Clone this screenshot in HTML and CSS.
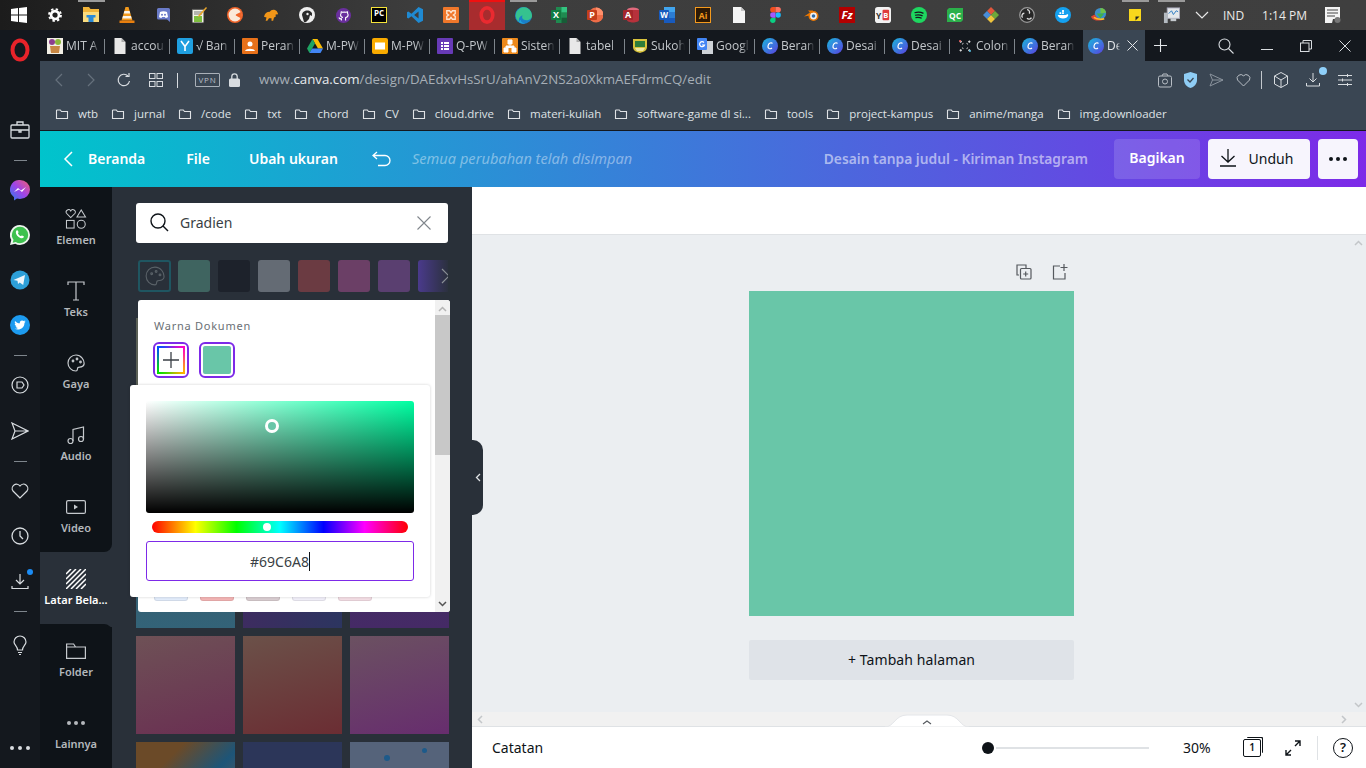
FILE: index.html
```html
<!DOCTYPE html>
<html lang="en">
<head>
  <meta charset="UTF-8">
  <link rel="stylesheet" href="styles.css">
  <title>Desain tanpa judul - Kiriman Instagram</title>
</head>
<body>
  <svg class="defs" width="0" height="0">
    <symbol id="fld" viewBox="0 0 14 14"><path d="M1.500 3.500v8h11v-7H6.500l-1.200-1.500H2z" fill="none" stroke="currentColor" stroke-width="1.100"/></symbol>
    <symbol id="cv" viewBox="0 0 16 16"><defs><linearGradient id="cg" x1="0" y1="0" x2="1" y2="1"><stop offset="0" stop-color="#18b8dc"/><stop offset="1" stop-color="#5b3fe0"/></linearGradient></defs><circle cx="8" cy="8" r="8" fill="url(#cg)"/><path d="M10.500 5.500C9.500 4 6.500 5 6 8c-.4 2.500 2 3.500 4 2" fill="none" stroke="#fff" stroke-width="1.200"/></symbol>
    <symbol id="doc" viewBox="0 0 16 16"><path d="M2.500 0h7l4 4v12h-11z" fill="#e8e8e8"/><path d="M9.500 0v4h4z" fill="#aaa"/></symbol>
  </svg>

  <div class="taskbar">
    <div class="tb-cell tb-win"><svg width="16" height="16" viewBox="0 0 16 16" fill="#fff"><path d="M0 2l7-1v6.500H0zM8 1l8-1v7.500H8zM0 8.500h7V15l-7-1zM8 8.500h8V16l-8-1z"/></svg></div>
    <div class="tb-cell"><svg width="14" height="14" viewBox="0 0 16 16"><circle cx="8" cy="8" r="4.500" fill="none" stroke="#fff" stroke-width="3"/><circle cx="8" cy="8" r="6.800" fill="none" stroke="#fff" stroke-width="2.200" stroke-dasharray="2.700 2.640"/></svg></div>
    <div class="tb-cell tb-open"><svg width="18" height="18" viewBox="0 0 18 18"><path d="M1 1h6l1.500 2H17v13H1z" fill="#f2b53a"/><path d="M1 6h16v10H1z" fill="#fbdc7e"/><path d="M4.500 9h9v2.500h-2V16h-5v-4.500h-2z" fill="#2b8ad8"/></svg></div>
    <div class="tb-cell"><svg width="16" height="18" viewBox="0 0 16 18"><path d="M6.500 1h3l4 13.500h-11z" fill="#f39a1c"/><path d="M5.400 5h5.200l.7 2.500H4.700zM4 10h8l.7 2.500H3.300z" fill="#f8f3ea"/><path d="M.5 14.500h15V17H.5z" fill="#e97f0e"/></svg></div>
    <div class="tb-cell"><svg width="13" height="14" viewBox="0 0 13 14"><path d="M1.500 0h10A1.500 1.500 0 0 1 13 1.500V14l-3-2.500H1.500A1.500 1.500 0 0 1 0 10V1.500A1.500 1.500 0 0 1 1.500 0z" fill="#6a7bc8"/><path d="M3 4c2-1 5-1 7 0l1 5c-1 .7-2 1-2.500 1L8 9H5l-.5 1C4 10 3 9.700 2 9z" fill="#fff"/><circle cx="5" cy="6.800" r="1" fill="#6a7bc8"/><circle cx="8" cy="6.800" r="1" fill="#6a7bc8"/></svg></div>
    <div class="tb-cell"><svg width="16" height="17" viewBox="0 0 16 17"><path d="M1 2h12v14H1z" fill="#f2f2e8" stroke="#333"/><path d="M3 1v2M5 1v2M7 1v2M9 1v2M11 1v2" stroke="#333"/><path d="M3 9h8v6H3z" fill="#7fbf3f"/><path d="M3 5h8M3 7h8" stroke="#777"/><path d="M15 0l1 1-7 8-2 1 .6-2z" fill="#e9a52a"/></svg></div>
    <div class="tb-cell"><svg width="16" height="16" viewBox="0 0 16 16"><circle cx="8" cy="8" r="8" fill="#f0642a"/><circle cx="8" cy="8" r="6.400" fill="#fbe9da"/><path d="M15 4.500L7.500 8l7 3.500z" fill="#f0642a"/><path d="M10.500 5L7.500 8l3 3" fill="none" stroke="#fbe9da" stroke-width="1.200"/></svg></div>
    <div class="tb-cell"><svg width="15" height="12" viewBox="0 0 18 14"><path d="M0 9c1-4 3-6 7-6 1-2 4-3 6-2 2 .6 3 2 4 5l-3 .5V9l-2 1-1 4H9V11H6l-2 3H2l1-4z" fill="#f29618"/></svg></div>
    <div class="tb-cell"><svg width="16" height="16" viewBox="0 0 16 16"><circle cx="8" cy="8" r="8" fill="#efefef"/><path d="M3 8c0-4 6-6 9-3 1 1 1 3 1 4l-2-1-1 4-3 3H5z" fill="#2a2a2a"/><circle cx="8.500" cy="7" r="1.200" fill="#efefef"/><circle cx="12" cy="6.500" r="1" fill="#2a2a2a"/></svg></div>
    <div class="tb-cell"><svg width="15" height="15" viewBox="0 0 18 18"><circle cx="9" cy="9" r="9" fill="#6a2f9e"/><path d="M6.500 15v-2c-2 .4-2.500-.6-3-1.500M11.500 15v-2.500c0-.7 0-1 .2-1.200 1.800-.3 2.800-1 2.800-3 0-.8-.3-1.500-.7-2 .2-.6.100-1.300-.1-1.800-.7 0-1.300.3-1.800.7a7 7 0 0 0-3.800 0C7.700 4.800 7 4.500 6.300 4.500c-.2.500-.3 1.200-.1 1.800-.4.500-.7 1.200-.7 2 0 2 1 2.700 2.800 3" fill="none" stroke="#fff" stroke-width="1.300"/></svg></div>
    <div class="tb-cell"><span class="pc-logo">PC</span></div>
    <div class="tb-cell"><svg width="16" height="16" viewBox="0 0 18 18"><path d="M13 0l5 2.500v13L13 18 5 10.500 1.500 13 0 12V6l1.500-1L5 7.500zM13 5L8 9l5 4z" fill="#1f8ad2"/></svg></div>
    <div class="tb-cell"><svg width="16" height="16" viewBox="0 0 17 17"><rect width="17" height="17" rx="1" fill="#f0772a"/><path d="M4 4h3l1.500 2L10 4h3v3l-2 1.500L13 10v3h-3L8.500 11 7 13H4v-3l2-1.500L4 7z" fill="none" stroke="#fde3cf" stroke-width="1.400"/></svg></div>
    <div class="tb-cell tb-opera"><svg width="16" height="18" viewBox="0 0 18 20"><ellipse cx="9" cy="10" rx="6.500" ry="8" fill="none" stroke="#ea2a30" stroke-width="4"/></svg></div>
    <div class="tb-cell tb-open"><svg width="17" height="17" viewBox="0 0 18 18"><circle cx="9" cy="9" r="9" fill="#1a7fc8"/><path d="M18 9.500c0 2.500-3 4.500-6 4.500-3.500 0-5.500-2.500-4-5-3.500.5-5 4.500-3 7.500C1.500 14 0 11 1 7 2.500 2 7 0 10 .3c4.500.4 8 4.200 8 9.200z" fill="#35c28f"/><path d="M4 16c2 2 5 2 7 1.500-3 0-5-2-5-4z" fill="#1fa4e0"/></svg></div>
    <div class="tb-cell"><svg width="16" height="16" viewBox="0 0 16 16"><path d="M5 0h11v16H5z" fill="#1f8a50"/><path d="M10.500 0H16v5.300h-5.500z" fill="#33c481"/><path d="M10.500 10.700H16V16h-5.500z" fill="#185c37"/><rect y="3" width="10" height="10" rx="1" fill="#107c41"/><text x="5" y="11" text-anchor="middle" class="logo-txt" fill="#fff" font-size="9">X</text></svg></div>
    <div class="tb-cell"><svg width="16" height="16" viewBox="0 0 16 16"><circle cx="9" cy="8" r="7.500" fill="#ed6c47"/><path d="M9 .5A7.500 7.500 0 0 1 16.500 8H9z" fill="#ff8f6b"/><rect y="3" width="10" height="10" rx="1" fill="#c43e1c"/><text x="5" y="11" text-anchor="middle" class="logo-txt" fill="#fff" font-size="9">P</text></svg></div>
    <div class="tb-cell"><svg width="16" height="16" viewBox="0 0 16 16"><ellipse cx="10" cy="3" rx="6" ry="2.500" fill="#e0697c"/><path d="M4 3v10c0 1.500 3 2.500 6 2.500s6-1 6-2.500V3z" fill="#b7313b"/><rect y="3" width="10" height="10" rx="1" fill="#a4262c"/><text x="5" y="11" text-anchor="middle" class="logo-txt" fill="#fff" font-size="9">A</text></svg></div>
    <div class="tb-cell"><svg width="16" height="16" viewBox="0 0 16 16"><path d="M5 0h11v16H5z" fill="#2b7cd3"/><path d="M5 0h11v5H5z" fill="#41a5ee"/><path d="M5 11h11v5H5z" fill="#185abd"/><rect y="3" width="10" height="10" rx="1" fill="#185abd"/><text x="5" y="11" text-anchor="middle" class="logo-txt" fill="#fff" font-size="8">W</text></svg></div>
    <div class="tb-cell"><svg width="16" height="16" viewBox="0 0 16 16"><rect x=".5" y=".5" width="15" height="15" fill="#2e1a05" stroke="#f59a1d"/><text x="8" y="11.500" text-anchor="middle" class="logo-txt" fill="#f59a1d" font-size="8.500">Ai</text></svg></div>
    <div class="tb-cell"><svg width="12" height="16" viewBox="0 0 12 16"><path d="M0 0h8l4 4v12H0z" fill="#f4f4f4"/><path d="M8 0v4h4z" fill="#c4c4c4"/></svg></div>
    <div class="tb-cell"><svg width="11" height="16" viewBox="0 0 12 18"><circle cx="9" cy="9" r="3" fill="#1abcfe"/><path d="M3 12h3v3a3 3 0 1 1-3-3z" fill="#0acf83"/><path d="M3 6h3v6H3a3 3 0 0 1 0-6z" fill="#a259ff"/><path d="M3 0h3v6H3a3 3 0 0 1 0-6z" fill="#f24e1e"/><path d="M6 0h3a3 3 0 0 1 0 6H6z" fill="#ff7262"/></svg></div>
    <div class="tb-cell"><svg width="15" height="13" viewBox="0 0 15 13"><circle cx="9.500" cy="7" r="4.200" fill="#f0f0f0" stroke="#ea7600" stroke-width="1.600"/><circle cx="9.500" cy="7" r="1.800" fill="#2b6aa8"/><path d="M0 7.500L6 3.500V6.500zM4 1.500h5v2H6z" fill="#ea7600"/></svg></div>
    <div class="tb-cell"><svg width="16" height="16" viewBox="0 0 17 17"><rect width="17" height="17" fill="#b30000"/><text x="8.500" y="13" text-anchor="middle" class="logo-txt" fill="#fff" font-size="12" font-style="italic">Fz</text></svg></div>
    <div class="tb-cell"><svg width="16" height="16" viewBox="0 0 17 17"><rect width="17" height="17" rx="3" fill="#f2f2f2"/><text x="1" y="12.500" class="logo-txt" fill="#333" font-size="9">Y</text><rect x="8" y="3" width="7" height="11" rx="1" fill="#e03a3a"/><text x="11.500" y="12" text-anchor="middle" class="logo-txt" fill="#fff" font-size="8">B</text></svg></div>
    <div class="tb-cell"><svg width="16" height="16" viewBox="0 0 18 18"><circle cx="9" cy="9" r="9" fill="#1ed760"/><path d="M4 6.500c3-1 7-1 10 .7M4.500 9.300c3-.8 6-.6 8.500.7M5 12c2.500-.6 5-.4 7 .6" stroke="#14181e" stroke-width="1.400" fill="none"/></svg></div>
    <div class="tb-cell"><svg width="16" height="14" viewBox="0 0 16 14"><path d="M2 0h14v12l-2 2H0V2z" fill="#2bb04a"/><text x="8" y="10.500" text-anchor="middle" class="logo-txt" fill="#fff" font-size="8.500">QC</text></svg></div>
    <div class="tb-cell"><svg width="16" height="16" viewBox="0 0 18 18"><path d="M9 0l4.500 4.500L9 9 4.500 4.500z" fill="#e0563c"/><path d="M13.500 4.500L18 9l-4.500 4.500L9 9z" fill="#6ea83a"/><path d="M4.500 4.500L9 9l-4.500 4.500L0 9z" fill="#4a8ed8"/><path d="M9 9l4.500 4.500L9 18l-4.500-4.500z" fill="#f0c43c"/></svg></div>
    <div class="tb-cell"><svg width="16" height="16" viewBox="0 0 18 18"><circle cx="9" cy="9" r="8.200" fill="#262626" stroke="#9a9a9a" stroke-width="1.400"/><path d="M9 3a3 3 0 0 1 2.500 4.500M14 12a3 3 0 0 1-5 .5M4 12a3 3 0 0 1 2-5" fill="none" stroke="#ddd" stroke-width="1.500"/></svg></div>
    <div class="tb-cell"><svg width="16" height="16" viewBox="0 0 18 18"><circle cx="9" cy="9" r="9" fill="#14a1f0"/><path d="M3 9h9c1 0 1.500-1 2-1l1 1c-1 3-3 4-6 4-3 0-5-1-6-4z" fill="#fff"/><path d="M5 6h2v2H5zM8 6h2v2H8zM8 3.500h2v2H8z" fill="#fff"/></svg></div>
    <div class="tb-cell"><svg width="17" height="16" viewBox="0 0 18 17"><circle cx="10" cy="7" r="6" fill="#3d8fc9"/><path d="M10 1a6 6 0 0 1 6 5l-6 1z" fill="#6fc24a"/><path d="M6 7h8l-4 5z" fill="#3fb14a"/><path d="M0 10c1 4 8 6 15 3-4 0-9 0-11-5z" fill="#e2452f"/><path d="M3 11c3 2 7 2.500 11 1.500" stroke="#f5c02e" stroke-width="1.500" fill="none"/></svg></div>
    <div class="tb-cell tb-open"><svg width="12" height="12" viewBox="0 0 12 12"><path d="M0 0h12v12H0z" fill="#f9d71c"/><path d="M6.500 11.500V7.500h4z" fill="#222"/></svg></div>
    <div class="tb-cell tb-open"><svg width="17" height="17" viewBox="0 0 18 18"><rect x="4.500" y="1" width="13" height="11" fill="#e4e7ea" stroke="#aab"/><path d="M6 7l3-3 2 4 3-4 2 1" stroke="#2878c0" fill="none"/><rect x="1" y="6" width="4" height="11" fill="#b4bac0"/><path d="M8 12h6v3H8z" fill="#c6cbd0"/></svg></div>
    <div class="tray">
      <svg width="14" height="8" viewBox="0 0 14 8"><path d="M1 1l6 6 6-6" fill="none" stroke="#e8e8e8" stroke-width="1.200"/></svg>
      <span class="tray-lang">IND</span>
      <span class="tray-time">1:14 PM</span>
      <svg class="tray-note" width="18" height="18" viewBox="0 0 18 18"><path d="M1 1h15v12H9l-1 4H1z" fill="#f4f4f4"/><path d="M3 4h11M3 7h11M3 10h8" stroke="#444"/><circle cx="13.500" cy="14" r="3" fill="#777"/></svg>
    </div>
  </div>

  <div class="window">
    <aside class="opera-side">
      <div class="side-logo"><svg width="20" height="24" viewBox="0 0 20 24"><ellipse cx="10" cy="12" rx="7.500" ry="9.500" fill="none" stroke="#e8232a" stroke-width="4"/></svg></div>
      <div class="side-ico side-brief"><svg width="20" height="18" viewBox="0 0 20 18" fill="none" stroke="#d8dce0" stroke-width="1.300"><rect x="1" y="4" width="18" height="13" rx="1"/><path d="M7 4V1h6v3M1 9h18M9 9h2v2H9z"/></svg></div>
      <div class="side-dash"></div>
      <div class="side-ico"><svg width="20" height="21" viewBox="0 0 20 21"><defs><linearGradient id="mg" x1="0" y1="1" x2="1" y2="0"><stop offset="0" stop-color="#2a7ef0"/><stop offset=".5" stop-color="#a044e8"/><stop offset="1" stop-color="#f45f70"/></linearGradient></defs><path d="M10 0a10 9.500 0 0 1 0 19c-1 0-2-.2-3-.4L4 20.500v-3.300A9.500 9.500 0 0 1 10 0z" fill="url(#mg)"/><path d="M4 12l4-4 3 2.500L16 7l-4 5-3-2.500z" fill="#fff"/></svg></div>
      <div class="side-ico"><svg width="20" height="20" viewBox="0 0 20 20"><path d="M10 0a10 10 0 0 1 0 20c-1.800 0-3.400-.4-4.800-1.200L0 20l1.300-5A10 10 0 0 1 10 0z" fill="#eef5ee"/><path d="M10 1.800a8.200 8.200 0 0 1 0 16.400c-1.600 0-3-.4-4.300-1.200l-3 .8.800-3A8.200 8.200 0 0 1 10 1.800z" fill="#3ec14f"/><path d="M6.500 5.500c1-.8 1.500 0 2 1.500.2.600-.7 1-.5 1.500.5 1.200 1.500 2.100 2.700 2.600.5.100.9-.8 1.400-.6 1.500.6 2.300 1 1.500 2-1 1.300-3 .9-5-.5-2-1.500-3.700-4.500-2.100-6.500z" fill="#fff"/></svg></div>
      <div class="side-ico"><svg width="20" height="20" viewBox="0 0 20 20"><circle cx="10" cy="10" r="9.500" fill="#2d9fd8"/><path d="M3.500 10L15 5l-1.800 10-3.500-2.500L8 14l-.5-3.300z" fill="#eef6fb"/></svg></div>
      <div class="side-ico"><svg width="20" height="20" viewBox="0 0 20 20"><circle cx="10" cy="10" r="10" fill="#1d9bf0"/><path d="M4.500 13.800c4.500 2.200 10-.3 10-6 .5-.3.900-.8 1.100-1.300-.5.200-.9.300-1.300.3.500-.3.800-.8 1-1.300-.5.300-1 .5-1.500.6a2.400 2.400 0 0 0-4 2.200C8 8.200 6.300 7.300 5.100 5.900c-.6 1.100-.3 2.500.7 3.200-.4 0-.8-.1-1.100-.3 0 1.200.8 2.200 2 2.400-.4.100-.8.100-1.100 0 .3 1 1.200 1.700 2.300 1.700-1 .7-2.200 1-3.400.9z" fill="#fff"/></svg></div>
      <div class="side-dash"></div>
      <div class="side-ico"><svg width="18" height="18" viewBox="0 0 18 18" fill="none" stroke="#d8dce0" stroke-width="1.200"><circle cx="9" cy="9" r="8"/><path d="M6 6h5l2 3-2 3H6z"/></svg></div>
      <div class="side-ico side-send"><svg width="18" height="18" viewBox="0 0 18 18" fill="none" stroke="#d8dce0" stroke-width="1.200"><path d="M1 1l16 8-16 8 3-8zM4 9h13"/></svg></div>
      <div class="side-dash"></div>
      <div class="side-ico"><svg width="18" height="16" viewBox="0 0 18 16" fill="none" stroke="#d8dce0" stroke-width="1.200"><path d="M9 15L2 8a4.300 4.300 0 0 1 7-5 4.300 4.300 0 0 1 7 5z"/></svg></div>
      <div class="side-ico"><svg width="18" height="18" viewBox="0 0 18 18" fill="none" stroke="#d8dce0" stroke-width="1.300"><circle cx="9" cy="9" r="8"/><path d="M9 4v5l3 3"/></svg></div>
      <div class="side-ico side-dl"><svg width="18" height="17" viewBox="0 0 18 17" fill="none" stroke="#d8dce0" stroke-width="1.200"><path d="M9 1v10M5 7l4 4 4-4M1 13v2.500h16V13"/></svg><span class="blue-dot"></span></div>
      <div class="side-dash"></div>
      <div class="side-ico side-bulb"><svg width="14" height="20" viewBox="0 0 14 20" fill="none" stroke="#d8dce0" stroke-width="1.200"><path d="M4.500 15C4.500 11 1 10 1 7a6 6 0 0 1 12 0c0 3-3.500 4-3.500 8z"/><path d="M5 17.500h4M6 19.500h2"/></svg></div>
      <div class="side-more"><i></i><i></i><i></i></div>
    </aside>

    <div class="browser">
      <div class="tabs">
        <div class="tab"><svg class="fav" viewBox="0 0 16 16"><rect width="16" height="16" fill="#f2efe6"/><circle cx="5" cy="4" r="3" fill="#8c3f8e"/><circle cx="11" cy="4" r="3" fill="#8ab83a"/><path d="M3 8h10l-1 7H4z" fill="#c88744"/></svg><span class="tab-name">MIT A</span></div>
        <div class="tab"><svg class="fav"><use href="#doc"/></svg><span class="tab-name">accou</span></div>
        <div class="tab"><svg class="fav" viewBox="0 0 16 16"><rect width="16" height="16" rx="2" fill="#1f9fe0"/><path d="M4 3l4 5.500L12 3M8 8.500V13" fill="none" stroke="#fff" stroke-width="1.600"/></svg><span class="tab-name">√ Ban</span></div>
        <div class="tab"><svg class="fav" viewBox="0 0 16 16"><rect width="16" height="16" rx="1" fill="#e8711a"/><circle cx="8" cy="6" r="2.500" fill="#fff"/><path d="M3 13c1-3 9-3 10 0z" fill="#fff"/></svg><span class="tab-name">Peran</span></div>
        <div class="tab"><svg class="fav" viewBox="0 0 16 16"><path d="M5.500 1h5L16 10.500h-5z" fill="#fbbc04"/><path d="M5.500 1L0 10.500 2.500 15 8 5.500z" fill="#1fa463"/><path d="M2.500 15h11l2.500-4.500H5z" fill="#4285f4"/></svg><span class="tab-name">M-PW</span></div>
        <div class="tab"><svg class="fav" viewBox="0 0 16 16"><rect width="16" height="16" rx="2" fill="#f9ab00"/><rect x="3" y="4.500" width="10" height="7" fill="#fff"/></svg><span class="tab-name">M-PW</span></div>
        <div class="tab"><svg class="fav" viewBox="0 0 16 16"><rect width="16" height="16" rx="1" fill="#673ab7"/><path d="M4 4h2v2H4zM7 4h5v2H7zM4 7h2v2H4zM7 7h5v2H7zM4 10h2v2H4zM7 10h5v2H7z" fill="#fff"/></svg><span class="tab-name">Q-PW</span></div>
        <div class="tab"><svg class="fav" viewBox="0 0 16 16"><rect width="16" height="16" rx="1" fill="#ee8a1c"/><path d="M6 2h4v4H6zM2 10h4v4H2zM10 10h4v4h-4zM8 6v2M4 10V8h8v2" fill="#fff" stroke="#fff"/></svg><span class="tab-name">Sisten</span></div>
        <div class="tab"><svg class="fav"><use href="#doc"/></svg><span class="tab-name">tabel</span></div>
        <div class="tab"><svg class="fav" viewBox="0 0 16 16"><path d="M1 1h14v8c0 4-4 5-7 6-3-1-7-2-7-6z" fill="#d8c23c"/><path d="M3 3h10v6H3z" fill="#2e7d3a"/><path d="M3 10h10l-2 3H5z" fill="#f0e8a0"/></svg><span class="tab-name">Sukoh</span></div>
        <div class="tab"><svg class="fav" viewBox="0 0 16 16"><rect x="5" y="3" width="11" height="13" fill="#cfd3d8"/><rect width="10" height="12" rx="1" fill="#4285f4"/><path d="M7 4.500A2.500 2.500 0 1 0 7.500 7H5" fill="none" stroke="#fff" stroke-width="1.200"/></svg><span class="tab-name">Googl</span></div>
        <div class="tab"><svg class="fav"><use href="#cv"/></svg><span class="tab-name">Beran</span></div>
        <div class="tab"><svg class="fav"><use href="#cv"/></svg><span class="tab-name">Desai</span></div>
        <div class="tab"><svg class="fav"><use href="#cv"/></svg><span class="tab-name">Desai</span></div>
        <div class="tab"><svg class="fav" viewBox="0 0 16 16"><path d="M3 3l3 3M13 3l-3 3M3 13l3-3M13 13l-3-3" stroke-width="2" stroke="#d8d8d8" stroke-dasharray="2 1.500"/><circle cx="3" cy="3" r="1" fill="#e85d5d"/><circle cx="13" cy="13" r="1" fill="#4bb5d8"/></svg><span class="tab-name">Colon</span></div>
        <div class="tab tab-last"><svg class="fav"><use href="#cv"/></svg><span class="tab-name">Beran</span></div>
        <div class="tab tab-active"><svg class="fav"><use href="#cv"/></svg><span class="tab-name">De</span><svg class="tab-x" width="11" height="11" viewBox="0 0 11 11"><path d="M.5.500l10 10M10.500.500l-10 10" stroke="#e4e7ea"/></svg></div>
        <div class="tab-plus"><svg width="13" height="13" viewBox="0 0 13 13"><path d="M6.500 0v13M0 6.500h13" stroke="#e4e7ea" stroke-width="1.100"/></svg></div>
        <div class="win-btns">
          <svg width="16" height="16" viewBox="0 0 16 16" fill="none" stroke="#d8dce0" stroke-width="1.100"><circle cx="6.500" cy="6.500" r="5.500"/><path d="M10.500 10.500L15.500 15.500"/></svg>
          <svg width="12" height="12" viewBox="0 0 12 12"><path d="M0 9.500h12" stroke="#d8dce0"/></svg>
          <svg width="12" height="12" viewBox="0 0 12 12" fill="none" stroke="#d8dce0"><rect x=".5" y="3" width="8.500" height="8.500"/><path d="M3 3V.5h8.500V9H9"/></svg>
          <svg width="12" height="12" viewBox="0 0 12 12"><path d="M.5.500l11 11M11.500.500l-11 11" stroke="#d8dce0"/></svg>
        </div>
      </div>

      <div class="addr">
        <svg class="a-back" width="9" height="14" viewBox="0 0 9 14"><path d="M8 1L2 7l6 6" fill="none" stroke="#66717d" stroke-width="1.200"/></svg>
        <svg class="a-fwd" width="9" height="14" viewBox="0 0 9 14"><path d="M1 1l6 6-6 6" fill="none" stroke="#66717d" stroke-width="1.200"/></svg>
        <svg class="a-reload" width="14" height="14" viewBox="0 0 14 14" fill="none" stroke="#d8dce0" stroke-width="1.200"><path d="M12.500 8A5.700 5.700 0 1 1 11 3"/><path d="M8.500 3.500H12V0"/></svg>
        <svg class="a-grid" width="14" height="14" viewBox="0 0 14 14" fill="none" stroke="#d8dce0"><rect x=".5" y=".5" width="5.500" height="5"/><rect x="8" y=".5" width="5.500" height="5"/><rect x=".5" y="8.500" width="5.500" height="5"/><rect x="8" y="8.500" width="5.500" height="5"/></svg>
        <span class="a-sep"></span>
        <span class="a-vpn">VPN</span>
        <svg class="a-lock" width="11" height="14" viewBox="0 0 11 14"><rect y="5.500" width="11" height="8.500" rx="1.500" fill="#d8dce0"/><path d="M2.800 6V3.500a2.700 2.700 0 0 1 5.400 0V6" fill="none" stroke="#d8dce0" stroke-width="1.300"/></svg>
        <div class="a-url">www.<b>canva.com</b>/design/DAEdxvHsSrU/ahAnV2NS2a0XkmAEFdrmCQ/edit</div>
        <div class="a-tools">
          <svg width="14" height="15" viewBox="0 0 14 15" fill="none" stroke="#b8bec5"><rect x=".5" y="3" width="13" height="11" rx="1.500"/><circle cx="7" cy="8.500" r="2.500"/><path d="M4 3l1-2h4l1 2"/></svg>
          <svg width="13" height="16" viewBox="0 0 13 16"><path d="M0 2l6.500-2L13 2v6c0 4-3 7-6.500 8C3 15 0 12 0 8z" fill="#8fcdf5"/><path d="M3.500 7.500l2.500 2.500 3.500-4" fill="none" stroke="#3a4653" stroke-width="1.300"/></svg>
          <svg width="15" height="14" viewBox="0 0 15 14" fill="none" stroke="#8a939d"><path d="M1 1l13 6-13 6 2.500-6zM3.500 7H14"/></svg>
          <svg width="15" height="14" viewBox="0 0 15 14" fill="none" stroke="#b8bec5"><path d="M7.500 13L1.500 7A3.700 3.700 0 0 1 7.500 2.800 3.700 3.700 0 0 1 13.500 7z"/></svg>
          <span class="a-tsep"></span>
          <svg width="14" height="16" viewBox="0 0 14 16" fill="none" stroke="#d8dce0"><path d="M7 .5l6.500 3.500v8L7 15.500.5 12V4zM.5 4L7 8l6.500-4M7 8v7.500"/></svg>
          <span class="a-dl"><svg width="14" height="14" viewBox="0 0 14 14" fill="none" stroke="#d8dce0"><path d="M7 0v9M3.500 5.500L7 9l3.500-3.500M.5 10v3h13v-3"/></svg><span class="light-dot"></span></span>
          <svg width="14" height="14" viewBox="0 0 14 14" fill="none" stroke="#d8dce0"><path d="M0 2.500h14M0 7h14M0 11.500h14"/><path d="M9.500 1v3M4.500 5.500v3M9.500 10v3"/></svg>
        </div>
      </div>

      <div class="bmarks">
        <span class="bm"><svg><use href="#fld"/></svg>wtb</span>
        <span class="bm"><svg><use href="#fld"/></svg>jurnal</span>
        <span class="bm"><svg><use href="#fld"/></svg>/code</span>
        <span class="bm"><svg><use href="#fld"/></svg>txt</span>
        <span class="bm"><svg><use href="#fld"/></svg>chord</span>
        <span class="bm"><svg><use href="#fld"/></svg>CV</span>
        <span class="bm"><svg><use href="#fld"/></svg>cloud.drive</span>
        <span class="bm"><svg><use href="#fld"/></svg>materi-kuliah</span>
        <span class="bm"><svg><use href="#fld"/></svg>software-game dl si...</span>
        <span class="bm"><svg><use href="#fld"/></svg>tools</span>
        <span class="bm"><svg><use href="#fld"/></svg>project-kampus</span>
        <span class="bm"><svg><use href="#fld"/></svg>anime/manga</span>
        <span class="bm"><svg><use href="#fld"/></svg>img.downloader</span>
      </div>

      <header class="cv-head">
        <svg class="head-back" width="10" height="16" viewBox="0 0 10 16"><path d="M9 1L2 8l7 7" fill="none" stroke="#fff" stroke-width="1.500"/></svg>
        <span class="head-link head-home">Beranda</span>
        <span class="head-link head-file">File</span>
        <span class="head-link">Ubah ukuran</span>
        <svg class="head-undo" width="19" height="16" viewBox="0 0 19 16" fill="none" stroke="#fff" stroke-width="1.300"><path d="M5 1L1 4.500 5 8M1 4.500h12a4.500 4.500 0 0 1 0 10H6"/></svg>
        <span class="head-saved">Semua perubahan telah disimpan</span>
        <span class="head-title">Desain tanpa judul - Kiriman Instagram</span>
        <span class="btn-share">Bagikan</span>
        <span class="btn-white btn-dl"><svg width="18" height="18" viewBox="0 0 18 18" fill="none" stroke="#0e1318" stroke-width="1.300"><path d="M9 0v12.500M2.500 7L9 13l6.500-6M1 17h16"/></svg>Unduh</span>
        <span class="btn-white btn-more"><i></i><i></i><i></i></span>
      </header>

      <div class="editor">
        <nav class="nav">
          <div class="nav-item"><svg width="22" height="21" viewBox="0 0 22 21" fill="none" stroke="#c5c9cd" stroke-width="1.100"><path d="M5.500 9L1 4.500A2.500 2.500 0 0 1 5.500 2 2.500 2.500 0 0 1 10 4.500z"/><path d="M16.500 1l4.500 7.500h-9z"/><rect x="1" y="12" width="8" height="8"/><circle cx="16.500" cy="16" r="4.200"/></svg><span>Elemen</span></div>
          <div class="nav-item"><svg width="18" height="20" viewBox="0 0 18 20" fill="none" stroke="#c5c9cd" stroke-width="1.200"><path d="M1 4V1h16v3M9 1v18M6 19h6"/></svg><span>Teks</span></div>
          <div class="nav-item"><svg width="18" height="18" viewBox="0 0 18 18" fill="none" stroke="#c5c9cd" stroke-width="1.200"><path d="M9 1a8 8 0 1 0 0 16c2 0 1-2.500 2-3.500s5 .5 6-3c.8-4.500-3-9.500-8-9.500z"/><circle cx="6" cy="7" r=".8"/><circle cx="10" cy="5" r=".8"/><circle cx="13.500" cy="8" r=".8"/></svg><span>Gaya</span></div>
          <div class="nav-item"><svg width="18" height="19" viewBox="0 0 18 19" fill="none" stroke="#c5c9cd" stroke-width="1.200"><circle cx="3.500" cy="15.500" r="2.500"/><circle cx="14" cy="13.500" r="2.500"/><path d="M6 15.500V4l10.500-2.500v12"/></svg><span>Audio</span></div>
          <div class="nav-item"><svg width="20" height="14" viewBox="0 0 20 14"><rect x=".6" y=".6" width="18.800" height="12.800" rx="1.500" fill="none" stroke="#c5c9cd" stroke-width="1.200"/><path d="M8 4.500l4 2.500-4 2.500z" fill="#c5c9cd"/></svg><span>Video</span></div>
          <div class="nav-item nav-active"><svg width="20" height="20" viewBox="0 0 20 20" fill="none" stroke="#fff" stroke-width="1.500"><path d="M0 5l5-5M0 10L10 0M0 15L15 0M0 20L20 0M5 20L20 5M10 20L20 10M15 20l5-5"/></svg><span>Latar Bela...</span></div>
          <div class="nav-item"><svg width="20" height="16" viewBox="0 0 20 16" fill="none" stroke="#c5c9cd" stroke-width="1.200"><path d="M.6 15.400V1h7l2 3h9.800v11.400zM.6 4h9"/></svg><span>Folder</span></div>
          <div class="nav-item"><span class="nav-dots"><i></i><i></i><i></i></span><span>Lainnya</span></div>
          <div class="nav-cutout"></div>
        </nav>

        <section class="panel">
          <div class="search">
            <svg width="19" height="19" viewBox="0 0 19 19" fill="none" stroke="#0e1318" stroke-width="1.400"><circle cx="8" cy="8" r="7"/><path d="M13 13l5 5"/></svg>
            <span class="search-text">Gradien</span>
            <svg class="search-x" width="14" height="14" viewBox="0 0 14 14"><path d="M.5.500l13 13M13.500.500l-13 13" stroke="#80868c" stroke-width="1.100"/></svg>
          </div>
          <div class="sw-row">
            <div class="sw sw-palette"><svg width="20" height="20" viewBox="0 0 18 18" fill="none" stroke="#5a6268" stroke-width="1"><path d="M9 1a8 8 0 1 0 0 16c2 0 1-2.500 2-3.500s5 .5 6-3c.8-4.500-3-9.500-8-9.500z"/><circle cx="6" cy="7" r=".8"/><circle cx="10" cy="5" r=".8"/><circle cx="13.500" cy="8" r=".8"/></svg></div>
            <div class="sw sw-c1"></div>
            <div class="sw sw-c2"></div>
            <div class="sw sw-c3"></div>
            <div class="sw sw-c4"></div>
            <div class="sw sw-c5"></div>
            <div class="sw sw-c6"></div>
            <div class="sw sw-c7"><svg width="9" height="16" viewBox="0 0 9 16"><path d="M1 1l7 7-7 7" fill="none" stroke="#8a8f95" stroke-width="1.200"/></svg></div>
          </div>
          <div class="tiles">
            <div class="tile t-a1"></div><div class="tile t-a2"></div><div class="tile t-a3"></div>
            <div class="tile t-a1"></div><div class="tile t-a2"></div><div class="tile t-a3"></div>
            <div class="tile t-b1"></div><div class="tile t-b2"></div><div class="tile t-b3"></div>
            <div class="tile t-c1"></div><div class="tile t-c2"></div><div class="tile t-c3"></div>
            <div class="tile t-d1"></div><div class="tile t-d2"></div><div class="tile t-d3"><i class="spot spot-a"></i><i class="spot spot-b"></i></div>
          </div>

          <div class="pop-colors">
            <div class="pop-body">
              <div class="pop-label">Warna Dokumen</div>
              <div class="doc-row">
                <div class="doc-sw doc-add"><span class="rainbow"><svg width="16" height="16" viewBox="0 0 16 16"><path d="M8 0v16M0 8h16" stroke="#3a3f45" stroke-width="1.300"/></svg></span></div>
                <div class="doc-sw"><span class="doc-fill"></span></div>
              </div>
              <div class="peek-row">
                <span class="peek p1"></span><span class="peek p2"></span><span class="peek p3"></span><span class="peek p4"></span><span class="peek p5"></span>
              </div>
            </div>
            <div class="pop-scroll">
              <svg width="9" height="6" viewBox="0 0 9 6"><path d="M1 5l3.500-3.500L8 5" fill="none" stroke="#b5b5b5" stroke-width="1.500"/></svg>
              <div class="pop-thumb"></div>
              <svg class="pop-down" width="9" height="6" viewBox="0 0 9 6"><path d="M1 1l3.500 3.500L8 1" fill="none" stroke="#555" stroke-width="1.500"/></svg>
            </div>
          </div>

          <div class="picker">
            <div class="pick-area"><span class="pick-knob"></span></div>
            <div class="hue"><span class="hue-knob"></span></div>
            <div class="hex"><span class="hex-val">#69C6A8</span></div>
          </div>
        </section>

        <div class="handle"><svg width="6" height="9" viewBox="0 0 6 9"><path d="M5 1L1.500 4.500 5 8" fill="none" stroke="#e0e3e6" stroke-width="1.300"/></svg></div>

        <main class="work">
          <div class="work-top"></div>
          <div class="work-mid">
            <div class="stage">
              <div class="page-tools">
                <svg width="16" height="16" viewBox="0 0 16 16" fill="none" stroke="#55595e" stroke-width="1.200"><path d="M3 11H1V1h9v3"/><rect x="4.500" y="4.500" width="10.500" height="10.500" rx="1"/><path d="M9.700 7.500v5M7.200 10h5"/></svg>
                <svg width="16" height="16" viewBox="0 0 16 16" fill="none" stroke="#55595e" stroke-width="1.200"><path d="M8 2H1.500v13H13V9M12 0v7M8.500 3.500h7"/></svg>
              </div>
              <div class="page"></div>
              <div class="add-page">+ Tambah halaman</div>
            </div>
            <div class="v-scroll">
              <svg width="9" height="6" viewBox="0 0 9 6"><path d="M1 5l3.500-3.500L8 5" fill="none" stroke="#c3c6c9" stroke-width="1.500"/></svg>
              <svg width="9" height="6" viewBox="0 0 9 6"><path d="M1 1l3.500 3.500L8 1" fill="none" stroke="#c3c6c9" stroke-width="1.500"/></svg>
            </div>
          </div>
          <div class="h-scroll">
            <svg width="6" height="9" viewBox="0 0 6 9"><path d="M5 1L1.500 4.500 5 8" fill="none" stroke="#c3c6c9" stroke-width="1.500"/></svg>
            <svg width="6" height="9" viewBox="0 0 6 9"><path d="M1 1l3.500 3.500L1 8" fill="none" stroke="#c3c6c9" stroke-width="1.500"/></svg>
            <svg class="notes-tab" width="84" height="13" viewBox="0 0 84 13"><path d="M0 13C9 13 10 1 22 1H62C74 1 75 13 84 13z" fill="#fff" stroke="#e4e6e9"/><path d="M38 10l4-3 4 3" fill="none" stroke="#55595e" stroke-width="1.100"/></svg>
          </div>
          <footer class="foot">
            <span class="foot-notes">Catatan</span>
            <div class="zoom-bar"><span class="zoom-knob"></span><span class="zoom-track"></span></div>
            <span class="zoom-val">30%</span>
            <span class="pages-btn"><span class="pages-num">1</span></span>
            <svg class="foot-exp" width="16" height="16" viewBox="0 0 16 16" fill="none" stroke="#0e1318" stroke-width="1.400"><path d="M10 1h5v5M15 1l-5 5M6 15H1v-5M1 15l5-5"/></svg>
            <span class="foot-sep"></span>
            <span class="help">?</span>
          </footer>
        </main>
      </div>
    </div>
  </div>
</body>
</html>
```

FILE: styles.css
```css
* {
  box-sizing: border-box;
}
html, body {
  margin: 0;
  height: 768px;
  overflow: hidden;
}
body {
  font-family: "Noto Sans", "Open Sans", sans-serif;
  background: #14181e;
  display: flex;
  flex-direction: column;
}
.defs {
  position: absolute;
}
.logo-txt {
  font-family: "Open Sans", sans-serif;
  font-weight: 700;
}

/* windows taskbar */
.taskbar {
  height: 30px;
  flex: none;
  display: flex;
  background: linear-gradient(to right, #1c1c1c, #2a2a2a 180px, #3d3d3d 420px, #3f3f3f);
}
.tb-cell {
  width: 36px;
  height: 30px;
  flex: none;
  display: flex;
  align-items: center;
  justify-content: center;
  position: relative;
}
.tb-win {
  width: 37px;
}
.tb-open::before {
  content: "";
  position: absolute;
  top: 0;
  left: 5px;
  right: 4px;
  height: 2px;
  background: #9a9a9a;
}
.tb-opera {
  background: #a82c2e;
}
.tb-opera::before {
  content: "";
  position: absolute;
  top: 0;
  left: 0;
  right: 0;
  height: 2px;
  background: #f01010;
}
.pc-logo {
  width: 16px;
  height: 16px;
  background: #000;
  border: 1px solid #f5e33a;
  color: #fff;
  font: 700 8px/10px "Open Sans", sans-serif;
  padding-left: 2px;
}
.tray {
  flex: 1;
  display: flex;
  align-items: center;
  color: #eceae8;
  font-family: "Open Sans", sans-serif;
  font-size: 12px;
  padding-left: 6px;
}
.tray-lang {
  margin-left: 14px;
}
.tray-time {
  margin-left: 18px;
}
.tray-note {
  margin-left: 17px;
}

.window {
  flex: 1;
  display: flex;
  min-height: 0;
}

/* opera sidebar */
.opera-side {
  width: 40px;
  flex: none;
  background: #14181e;
  position: relative;
  display: flex;
  flex-direction: column;
  align-items: center;
}
.side-logo {
  height: 24px;
  margin-top: 8px;
}
.side-ico {
  height: 20px;
  margin-top: 25px;
  display: flex;
  align-items: center;
  justify-content: center;
  position: relative;
}
.side-dash + .side-ico {
  margin-top: 0;
}
.side-brief {
  margin-top: 58px;
}
.side-send {
  margin-top: 26px;
}
.side-bulb {
  margin-top: 4px !important;
}
.side-dash {
  width: 13px;
  height: 1px;
  flex: none;
  background: #7e858c;
  margin: 20px 0 19px;
}
.blue-dot {
  position: absolute;
  top: -2px;
  right: -4px;
  width: 6px;
  height: 6px;
  border-radius: 50%;
  background: #1b8cf5;
}
.side-more {
  position: absolute;
  bottom: 18px;
  display: flex;
  gap: 4px;
}
.side-more i {
  width: 4px;
  height: 4px;
  border-radius: 50%;
  background: #d8dce0;
}

.browser {
  flex: 1;
  min-width: 0;
  display: flex;
  flex-direction: column;
}

/* tab strip */
.tabs {
  height: 31px;
  flex: none;
  display: flex;
  align-items: stretch;
  background: #14181e;
}
.tab {
  width: 65px;
  flex: none;
  display: flex;
  align-items: center;
  padding-left: 7px;
  gap: 3px;
  position: relative;
  color: #c3c7cb;
  font-family: "Open Sans", sans-serif;
  font-size: 12px;
}
.tab:not(.tab-active)::after {
  content: "";
  position: absolute;
  right: 0;
  top: 9px;
  height: 15px;
  width: 1px;
  background: #7e858c;
}
.tab-last::after {
  display: none;
}
.fav {
  width: 16px;
  height: 16px;
  flex: none;
}
.tab-name {
  white-space: nowrap;
  overflow: hidden;
  flex: 1;
  min-width: 0;
  margin-right: 3px;
  -webkit-mask-image: linear-gradient(to right, #000 70%, transparent 94%);
  mask-image: linear-gradient(to right, #000 70%, transparent 94%);
}
.tab-active {
  width: 62px;
  margin-left: 3px;
  background: #3a4653;
  padding-left: 5px;
  color: #e4e7ea;
}
.tab-x {
  flex: none;
  margin-right: 7px;
}
.tab-plus {
  width: 30px;
  display: flex;
  align-items: center;
  justify-content: center;
}
.win-btns {
  flex: 1;
  display: flex;
  align-items: center;
  padding-left: 43px;
  gap: 27px;
}

/* address bar */
.addr {
  height: 38px;
  flex: none;
  display: flex;
  align-items: center;
  background: #3a4653;
  padding-left: 14px;
  position: relative;
}
.a-fwd {
  margin-left: 24px;
}
.a-reload {
  margin-left: 21px;
}
.a-grid {
  margin-left: 18px;
}
.a-sep {
  width: 1px;
  height: 15px;
  background: #d8dce0;
  margin-left: 14px;
}
.a-vpn {
  margin-left: 17px;
  width: 25px;
  height: 14px;
  border: 1px solid #a9b0b8;
  border-radius: 1px;
  color: #b8bec5;
  font: 8px/12px "Open Sans", sans-serif;
  letter-spacing: .8px;
  text-align: center;
}
.a-lock {
  margin-left: 9px;
}
.a-url {
  margin-left: 19px;
  margin-bottom: 2px;
  color: #a6aeb6;
  font-family: "Open Sans", sans-serif;
  font-size: 13.3px;
  white-space: nowrap;
}
.a-url b {
  font-weight: 400;
  color: #e8ebee;
}
.a-tools {
  margin-left: auto;
  display: flex;
  align-items: center;
  gap: 12px;
  padding-right: 14px;
}
.a-tsep {
  width: 1px;
  height: 18px;
  background: #c3c8cd;
  margin-left: -2px;
}
.a-dl {
  position: relative;
  display: flex;
  margin: 0 6px;
}
.light-dot {
  position: absolute;
  top: -6px;
  right: -7px;
  width: 8px;
  height: 8px;
  border-radius: 50%;
  background: #8fd0fa;
}

/* bookmarks */
.bmarks {
  height: 32px;
  flex: none;
  display: flex;
  align-items: center;
  gap: 13px;
  padding: 0 0 2px 15px;
  background: #3a4653;
  border-bottom: 1px solid #14181e;
}
.bm {
  display: flex;
  align-items: center;
  gap: 9px;
  color: #dfe2e5;
  font-family: "Open Sans", sans-serif;
  font-size: 11.5px;
  white-space: nowrap;
}
.bm svg {
  width: 14px;
  height: 14px;
}

/* canva header */
.cv-head {
  height: 56px;
  flex: none;
  display: flex;
  align-items: center;
  background: linear-gradient(90deg, #00c4cc, #7d2ae8);
  padding-left: 23px;
  padding-right: 8px;
  color: #fff;
  font-size: 14px;
  font-weight: 600;
}
.head-link {
  white-space: nowrap;
  margin-bottom: 2px;
}
.head-home {
  margin-left: 15px;
}
.head-file {
  margin-left: 41px;
  margin-right: 39px;
}
.head-undo {
  margin-left: 34px;
}
.head-saved {
  margin-left: 21px;
  margin-bottom: 2px;
  font-weight: 400;
  font-style: italic;
  font-size: 14.6px;
  color: rgba(255, 255, 255, .42);
  white-space: nowrap;
}
.head-title {
  margin-left: auto;
  margin-bottom: 2px;
  font-size: 13.8px;
  color: rgba(255, 255, 255, .55);
  white-space: nowrap;
}
.btn-share {
  margin-left: 26px;
  width: 86px;
  height: 40px;
  padding-bottom: 3px;
  background: rgba(255, 255, 255, .14);
  border-radius: 4px;
  display: flex;
  align-items: center;
  justify-content: center;
}
.btn-white {
  margin-left: 8px;
  height: 40px;
  background: #f7f5fd;
  border-radius: 4px;
  display: flex;
  align-items: center;
  justify-content: center;
  color: #0e1318;
  font-weight: 400;
}
.btn-dl {
  width: 102px;
  gap: 12px;
  padding: 0 6px 2px 0;
}
.btn-more {
  width: 40px;
  gap: 3px;
}
.btn-more i, .nav-dots i {
  width: 4px;
  height: 4px;
  border-radius: 50%;
  background: #0e1318;
}

/* editor */
.editor {
  flex: 1;
  display: flex;
  min-height: 0;
  position: relative;
}
.nav {
  width: 72px;
  flex: none;
  background: #0e1318;
  padding-top: 5px;
  position: relative;
}
.nav-item {
  height: 72px;
  display: flex;
  flex-direction: column;
  align-items: center;
  justify-content: center;
  gap: 3px;
  color: #b4b8bc;
  font-size: 11px;
  font-weight: 600;
  padding-bottom: 1px;
  position: relative;
  z-index: 1;
}
.nav-item svg {
  display: block;
  height: 20px;
}
.nav-active {
  background: #293039;
  color: #fff;
  position: relative;
}
.nav-active::before, .nav-active::after {
  content: "";
  position: absolute;
  right: 0;
  width: 72px;
  height: 8px;
  background: #0e1318;
}
.nav-active::before {
  top: -8px;
  border-radius: 0 0 8px 0;
}
.nav-active::after {
  bottom: -8px;
  border-radius: 0 8px 0 0;
}
.nav-cutout {
  position: absolute;
  left: 0;
  right: 0;
  top: 357px;
  height: 83px;
  background: #293039;
  z-index: 0;
}
.nav-dots {
  height: 20px;
  display: flex;
  align-items: center;
  gap: 3px;
}
.nav-dots i {
  background: #b4b8bc;
}

/* side panel */
.panel {
  width: 360px;
  flex: none;
  background: #293039;
  padding: 16px 24px 0;
  position: relative;
  overflow: hidden;
}
.search {
  height: 40px;
  background: #fff;
  border-radius: 3px;
  display: flex;
  align-items: center;
  padding: 0 0 2px 14px;
  color: #3a3f45;
  font-size: 14px;
}
.search-text {
  margin-left: 11px;
}
.search-x {
  margin-left: auto;
  margin-right: 17px;
  margin-top: 2px;
}
.sw-row {
  display: flex;
  gap: 8px;
  margin: 17px 0 26px 2px;
  width: 310px;
  overflow: hidden;
}
.sw {
  width: 32px;
  height: 32px;
  flex: none;
  border-radius: 3px;
  display: flex;
  align-items: center;
  justify-content: center;
}
.sw-palette {
  border: 2px solid #1f5661;
  width: 33px;
  margin-right: -1px;
}
.sw-c1 { background: #3f6460; }
.sw-c2 { background: #1d222b; }
.sw-c3 { background: #646b74; }
.sw-c4 { background: #6b3b42; }
.sw-c5 { background: #6b3f66; }
.sw-c6 { background: #5a3f70; }
.sw-c7 {
  background: linear-gradient(to right, #4a3a8c, #293039);
  justify-content: flex-end;
}
.tiles {
  display: grid;
  grid-template-columns: repeat(3, 99px);
  grid-auto-rows: 98px;
  gap: 8px;
}
.t-a1 { background: #5a5f55; }
.t-a2 { background: #3e3a55; }
.t-a3 { background: #45305f; }
.t-b1 { background: linear-gradient(#3a5a6a, #336378); }
.t-b2 { background: linear-gradient(to right, #3d2c60, #2c3560); }
.t-b3 { background: linear-gradient(#3f2f62, #452a66); }
.t-c1 { background: linear-gradient(165deg, #6e5156, #6a2f52); }
.t-c2 { background: linear-gradient(165deg, #6b5149, #6b2d33); }
.t-c3 { background: linear-gradient(165deg, #6b5161, #672d6e); }
.t-d1 { background: linear-gradient(135deg, #6b4a28 25%, #1d5578 55%, #6a5a55 85%); }
.t-d2 { background: #2c3659; }
.t-d3 {
  background: #55637a;
  position: relative;
}
.spot {
  position: absolute;
  border-radius: 50%;
  background: #1d5a8a;
}
.spot-a {
  left: 34px;
  top: 13px;
  width: 6px;
  height: 6px;
}
.spot-b {
  left: 72px;
  top: 6px;
  width: 5px;
  height: 5px;
}

/* colour popups */
.pop-colors {
  position: absolute;
  left: 26px;
  top: 113px;
  width: 312px;
  height: 312px;
  background: #fff;
  border-radius: 3px;
  display: flex;
  overflow: hidden;
}
.pop-body {
  flex: 1;
  padding: 18px 15px 0 15px;
}
.pop-label {
  color: #6b7075;
  font-size: 11px;
  letter-spacing: .75px;
  line-height: 16px;
  margin-left: 1px;
}
.doc-row {
  display: flex;
  gap: 10px;
  margin-top: 8px;
}
.doc-sw {
  width: 36px;
  height: 36px;
  border: 2px solid #7d2ae8;
  border-radius: 6px;
  padding: 2px;
}
.doc-fill {
  display: block;
  width: 100%;
  height: 100%;
  background: #69c6a8;
  border-radius: 2px;
}
.rainbow {
  display: flex;
  align-items: center;
  justify-content: center;
  width: 100%;
  height: 100%;
  border: 2px solid;
  border-image: conic-gradient(from 315deg, #0050ff, #ff00c8 25%, #ffb000 50%, #00e000 75%, #0050ff) 1;
}
.peek-row {
  display: flex;
  gap: 12px;
  margin: 189px 0 0 1px;
}
.peek {
  width: 34px;
  height: 34px;
  border-radius: 3px;
  border: 1px solid rgba(0, 0, 0, .08);
}
.p1 { background: #e2ecfb; }
.p2 { background: #f3b4b4; }
.p3 { background: #d8ccd0; }
.p4 { background: #f0eef8; }
.p5 { background: #f3dde4; }
.pop-scroll {
  width: 15px;
  background: #f1f1f1;
  display: flex;
  flex-direction: column;
  align-items: center;
  padding-top: 6px;
}
.pop-thumb {
  width: 15px;
  height: 140px;
  margin-top: 3px;
  background: #c8c8c8;
}
.pop-down {
  margin-top: auto;
  margin-bottom: 5px;
}
.picker {
  position: absolute;
  left: 18px;
  top: 198px;
  width: 300px;
  height: 212px;
  background: #fff;
  border-radius: 3px;
  box-shadow: 0 0 3px rgba(14, 19, 24, .2);
  padding: 16px;
}
.pick-area {
  height: 112px;
  border-radius: 3px;
  position: relative;
  background: linear-gradient(to top, #000, transparent), linear-gradient(to right, #fff, #00ffa2);
}
.pick-knob {
  position: absolute;
  left: 119px;
  top: 18px;
  width: 14px;
  height: 14px;
  border-radius: 50%;
  border: 3px solid #fff;
  background: #69c6a8;
}
.hue {
  height: 12px;
  margin: 8px 6px 0;
  border-radius: 6px;
  position: relative;
  background: linear-gradient(to right, #f00, #ff0 17%, #0f0 33%, #0ff 50%, #00f 67%, #f0f 83%, #f00);
}
.hue-knob {
  position: absolute;
  left: 111px;
  top: 2px;
  width: 8px;
  height: 8px;
  border-radius: 50%;
  background: #fff;
}
.hex {
  height: 40px;
  margin-top: 8px;
  border: 1px solid #7d2ae8;
  border-radius: 3px;
  display: flex;
  align-items: center;
  justify-content: center;
}
.hex-val {
  color: #3a3f45;
  font-size: 14px;
  line-height: 19px;
  border-right: 1px solid #0e1318;
}
.handle {
  position: absolute;
  left: 432px;
  top: 253px;
  width: 11px;
  height: 75px;
  background: #293039;
  border-radius: 0 10px 10px 0;
  display: flex;
  align-items: center;
  justify-content: center;
}

/* workspace */
.work {
  flex: 1;
  min-width: 0;
  display: flex;
  flex-direction: column;
  background: #fff;
}
.work-top {
  height: 48px;
  flex: none;
  background: #fff;
  border-bottom: 1px solid #dfe2e5;
}
.work-mid {
  flex: 1;
  min-height: 0;
  display: flex;
  background: #ebeef1;
  overflow: hidden;
}
.stage {
  flex: 1;
  display: flex;
  flex-direction: column;
  align-items: center;
}
.page-tools {
  width: 325px;
  height: 56px;
  flex: none;
  display: flex;
  justify-content: flex-end;
  align-items: flex-start;
  gap: 20px;
  padding: 29px 6px 0 0;
}
.page {
  width: 325px;
  height: 325px;
  flex: none;
  background: #69c6a8;
}
.add-page {
  width: 325px;
  height: 40px;
  flex: none;
  margin-top: 24px;
  background: #dfe3e8;
  border-radius: 2px;
  color: #0e1318;
  font-size: 14px;
  letter-spacing: .1px;
  line-height: 40px;
  text-align: center;
}
.v-scroll {
  width: 15px;
  flex: none;
  display: flex;
  flex-direction: column;
  justify-content: space-between;
  align-items: center;
  padding: 5px 0 4px;
}
.h-scroll {
  height: 15px;
  flex: none;
  background: #f1f1f1;
  display: flex;
  align-items: center;
  justify-content: space-between;
  padding: 0 19px 0 5px;
  position: relative;
  border-bottom: 1px solid #dfe2e5;
}
.notes-tab {
  position: absolute;
  left: 413px;
  bottom: -1px;
}
.foot {
  height: 41px;
  flex: none;
  background: #fff;
  display: flex;
  align-items: center;
  padding-left: 20px;
  color: #0e1318;
  font-size: 14px;
}
.foot-notes {
  width: 490px;
}
.zoom-bar {
  width: 167px;
  display: flex;
  align-items: center;
}
.zoom-knob {
  width: 12px;
  height: 12px;
  border-radius: 50%;
  background: #0e1318;
}
.zoom-track {
  flex: 1;
  height: 2px;
  background: #dfe2e5;
  margin-left: 2px;
}
.zoom-val {
  margin-left: 34px;
  width: 60px;
}
.pages-btn {
  width: 18px;
  height: 18px;
  border: 1.500px solid #0e1318;
  border-radius: 2px;
  font-size: 10px;
  font-weight: 600;
  line-height: 15px;
  text-align: center;
  box-shadow: 2px -2px 0 -1px #fff, 3px -3px 0 -1px #0e1318;
}
.foot-exp {
  margin-left: 24px;
}
.foot-sep {
  width: 1px;
  height: 24px;
  background: #dfe2e5;
  margin-left: 16px;
}
.help {
  margin-left: 15px;
  width: 20px;
  height: 20px;
  border: 1.500px solid #0e1318;
  border-radius: 50%;
  font-size: 13px;
  font-weight: 600;
  line-height: 17px;
  text-align: center;
}
```
